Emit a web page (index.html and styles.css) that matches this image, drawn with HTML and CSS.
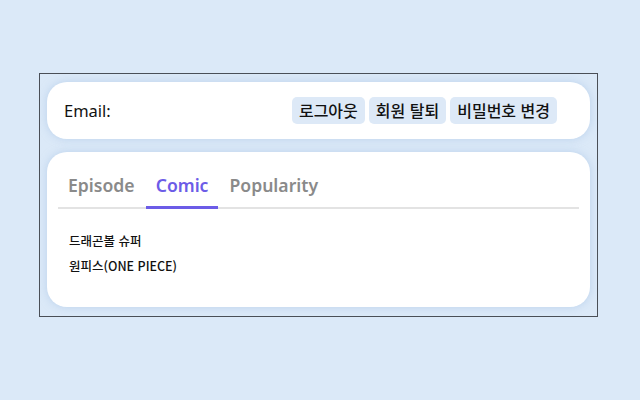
FILE: index.html
```html
<!DOCTYPE html>
<html lang="ko">
<head>
<meta charset="utf-8">
<link rel="stylesheet" href="styles.css">
</head>
<body>
<div class="frame">
  <header class="card top">
    <div class="email">Email:</div>
    <div class="actions">
      <button class="btn">로그아웃</button>
      <button class="btn">회원 탈퇴</button>
      <button class="btn">비밀번호 변경</button>
    </div>
  </header>
  <section class="card main">
    <nav class="tabs">
      <span class="tab">Episode</span>
      <span class="tab active">Comic</span>
      <span class="tab">Popularity</span>
    </nav>
    <ul class="list">
      <li>드래곤볼 슈퍼</li>
      <li>원피스(ONE PIECE)</li>
    </ul>
  </section>
</div>
</body>
</html>
```
FILE: styles.css
```css
* { box-sizing: border-box; }
html, body { margin: 0; padding: 0; }
body {
  background: #dbe9f8;
  width: 640px;
  height: 400px;
  font-family: "Noto Sans", "Noto Sans CJK KR", sans-serif;
  padding: 73px 0 0 39px;
}
.frame {
  width: 559px;
  height: 244px;
  border: 1px solid #4a4f57;
  padding: 8px 7px 0 7px;
  display: flex;
  flex-direction: column;
  gap: 13px;
}
.card {
  background: #fff;
  border-radius: 20px;
  box-shadow: 0 0 8px rgba(160, 190, 225, 0.55);
}
.top {
  height: 57px;
  display: flex;
  align-items: center;
  justify-content: space-between;
  padding: 0 33px 0 17px;
}
.email {
  font-size: 16.5px;
  font-weight: 400;
  color: #111;
  font-family: "Noto Sans", sans-serif;
}
.actions { display: flex; gap: 4px; }
.btn {
  font-family: "Noto Sans CJK KR", sans-serif;
  font-size: 16px;
  font-weight: 500;
  color: #111;
  background: #dde9f7;
  border: none;
  border-radius: 5px;
  height: 27px;
  padding: 0 7px;
  line-height: 27px;
}
.main {
  height: 155px;
  padding: 15px 11px 0 11px;
}
.tabs {
  display: flex;
  gap: 1px;
  border-bottom: 2px solid #e3e3e3;
}
.tab {
  font-size: 17.6px;
  font-weight: 600;
  color: #8a8a8a;
  padding: 4px 10px 7px;
  line-height: 28px;
  margin-bottom: -2px;
  border-bottom: 3px solid transparent;
}
.tab.active {
  color: #6c5ce7;
  border-bottom-color: #6c5ce7;
}
.list {
  list-style: none;
  margin: 0;
  padding: 24px 0 0 11px;
  font-family: "Noto Sans CJK KR", sans-serif;
  font-size: 12.5px;
  font-weight: 500;
  color: #111;
}
.list li { line-height: 15px; margin-bottom: 10px; }
```
